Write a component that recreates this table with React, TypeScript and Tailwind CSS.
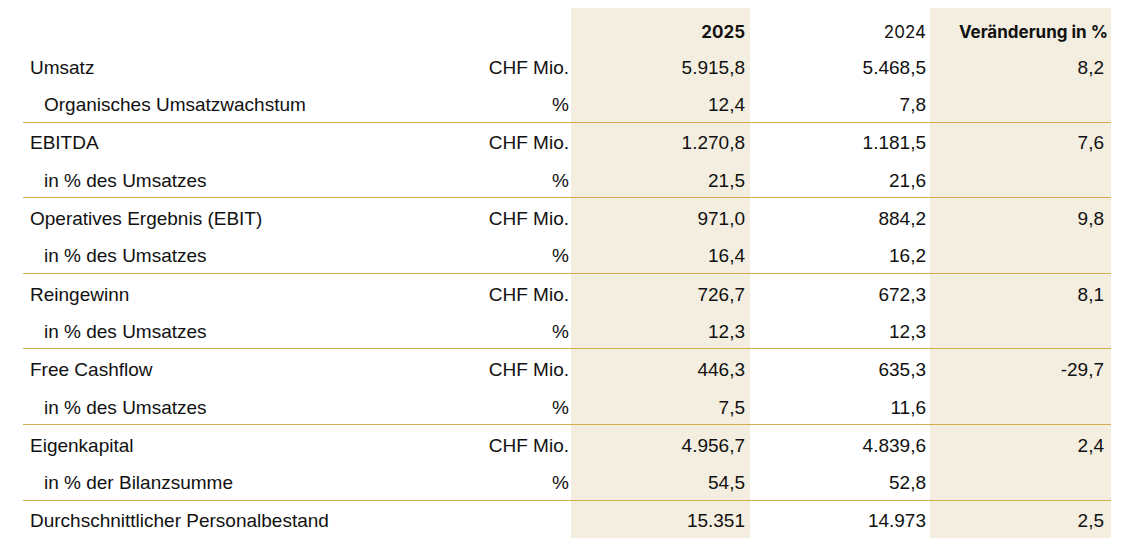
const SHADE = "bg-[#f4eee0]";

type Row = {
  label: string;
  unit: string;
  y2025: string;
  y2024: string;
  change?: string;
  sub?: boolean;
};

const groups: Row[][] = [
  [
    { label: "Umsatz", unit: "CHF Mio.", y2025: "5.915,8", y2024: "5.468,5", change: "8,2" },
    { label: "Organisches Umsatzwachstum", unit: "%", y2025: "12,4", y2024: "7,8", sub: true },
  ],
  [
    { label: "EBITDA", unit: "CHF Mio.", y2025: "1.270,8", y2024: "1.181,5", change: "7,6" },
    { label: "in % des Umsatzes", unit: "%", y2025: "21,5", y2024: "21,6", sub: true },
  ],
  [
    { label: "Operatives Ergebnis (EBIT)", unit: "CHF Mio.", y2025: "971,0", y2024: "884,2", change: "9,8" },
    { label: "in % des Umsatzes", unit: "%", y2025: "16,4", y2024: "16,2", sub: true },
  ],
  [
    { label: "Reingewinn", unit: "CHF Mio.", y2025: "726,7", y2024: "672,3", change: "8,1" },
    { label: "in % des Umsatzes", unit: "%", y2025: "12,3", y2024: "12,3", sub: true },
  ],
  [
    { label: "Free Cashflow", unit: "CHF Mio.", y2025: "446,3", y2024: "635,3", change: "-29,7" },
    { label: "in % des Umsatzes", unit: "%", y2025: "7,5", y2024: "11,6", sub: true },
  ],
  [
    { label: "Eigenkapital", unit: "CHF Mio.", y2025: "4.956,7", y2024: "4.839,6", change: "2,4" },
    { label: "in % der Bilanzsumme", unit: "%", y2025: "54,5", y2024: "52,8", sub: true },
  ],
  [
    { label: "Durchschnittlicher Personalbestand", unit: "", y2025: "15.351", y2024: "14.973", change: "2,5" },
  ],
];

const COLS = "grid grid-cols-[548px_179px_180px_181px]";

function DataRow({ row }: { row: Row }) {
  return (
    <div className={`${COLS} h-[37.3px]`}>
      <div className={`flex items-center justify-between pt-[5px] pr-[2px] ${row.sub ? "pl-[21px]" : "pl-[7px]"}`}>
        <span>{row.label}</span>
        <span>{row.unit}</span>
      </div>
      <div className={`flex items-center justify-end pt-[5px] pr-[5px] ${SHADE}`}>{row.y2025}</div>
      <div className="flex items-center justify-end pt-[5px] pr-[4px]">{row.y2024}</div>
      <div className={`flex items-center justify-end pt-[5px] pr-[7px] ${SHADE}`}>{row.change}</div>
    </div>
  );
}

export default function App() {
  return (
    <div className="min-h-screen bg-white pt-[8px] pl-[23px] font-['Liberation_Sans',Arial,sans-serif] text-[19px] text-[#111]">
      <div className="w-[1088px]">
        <div className={`${COLS} h-[39px] font-['Inter',sans-serif] text-[17px] font-bold`}>
          <div />
          <div className={`flex items-center justify-end pt-[11px] pr-[5px] ${SHADE}`}>2025</div>
          <div className="flex items-center justify-end pt-[11px] pr-[4px] font-normal">2024</div>
          <div className={`flex items-center justify-end pt-[11px] pr-[3px] ${SHADE}`}>Veränderung in %</div>
        </div>
        {groups.map((g, i) => (
          <div key={i} className={i === 0 ? "" : "border-t border-[#d2ae4c]"}>
            {g.map((r, j) => (
              <DataRow key={j} row={r} />
            ))}
          </div>
        ))}
      </div>
    </div>
  );
}
